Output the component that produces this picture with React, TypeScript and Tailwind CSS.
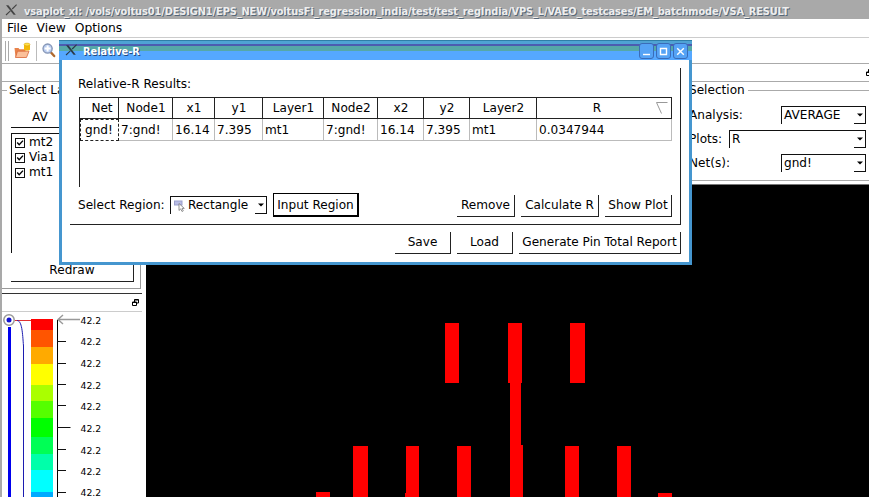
import React from "react";

const SANS = "font-['DejaVu_Sans',sans-serif]";

function XLogo({ tone }: { tone: string }) {
  return (
    <svg width="13" height="12" viewBox="0 0 13 12" className="shrink-0">
      <path d="M1 1.2h2.4l7.4 9.6H8.6z" fill={tone} />
      <path d="M11.6 0.6L7.2 5M5.4 6.8L1 11" stroke={tone} strokeWidth="1.1" />
    </svg>
  );
}

function FloatIcon() {
  return (
    <svg width="7" height="7" viewBox="0 0 7 7" className="shrink-0">
      <path d="M2.5 0.5h4v3.5h-4zM2.5 1h4" fill="none" stroke="#000" />
      <path d="M0.5 3h4v3.5h-4zM0.5 3.5h4" fill="#fff" stroke="#000" />
    </svg>
  );
}

function Caret() {
  return (
    <span className="flex h-[17px] w-[12px] shrink-0 items-center justify-center border-r border-b border-[#111]">
      <svg width="6" height="4" viewBox="0 0 6 4">
        <path d="M0 0.5h6l-3 3z" fill="#000" />
      </svg>
    </span>
  );
}

function Combo({ value, width, icon }: { value: string; width: string; icon?: React.ReactNode }) {
  return (
    <div className={`flex h-[18px] shrink-0 items-center border-t border-l border-[#111] pl-[2px] ${width}`}>
      {icon}
      <span className="flex-1">{value}</span>
      <Caret />
    </div>
  );
}

function Button({ label, width }: { label: string; width: string }) {
  return (
    <button className={`flex h-[22px] shrink-0 items-center justify-center border-r border-b border-[#222] ${width}`}>
      {label}
    </button>
  );
}

function CheckRow({ label }: { label: string }) {
  return (
    <div className="flex h-[15px] items-center gap-[4px]">
      <svg width="10" height="10" viewBox="0 0 10 10" className="shrink-0">
        <rect x="0.5" y="0.5" width="9" height="9" fill="#fff" stroke="#111" />
        <path d="M2.2 4.5l2 2.3L8 2.6" fill="none" stroke="#000" strokeWidth="1.4" />
      </svg>
      <span>{label}</span>
    </div>
  );
}

const bands: [number, number, string][] = [
  [6, 11, "#ff0000"],
  [17, 17, "#ff5500"],
  [34, 17, "#ffaa00"],
  [51, 21, "#ffff00"],
  [72, 16, "#aaff00"],
  [88, 17, "#55ff00"],
  [105, 19, "#00ff00"],
  [124, 17, "#00ff55"],
  [141, 16, "#00ffaa"],
  [157, 22, "#00ffff"],
  [179, 8, "#00aaff"],
];
const ticks = [28.5, 50, 71.5, 92.5, 114.5, 136.5, 157.5, 179.5];
const labels = [11, 32, 54, 76, 97, 119, 140.5, 162, 183];

function ColorScale() {
  return (
    <svg width="144" height="185" viewBox="2 -1 144 185" className="block">
      <path d="M15 7.5H31" stroke="#e03030" />
      <path d="M17 7.5C22 7.5 22.5 20 23.5 33V187" fill="none" stroke="#1c1cb0" />
      <rect x="8" y="14" width="3" height="173" fill="#0000ee" />
      <circle cx="9" cy="7" r="5.2" fill="#fff" stroke="#999" strokeWidth="1.5" />
      <circle cx="9" cy="7" r="2.5" fill="#1010d0" />
      {bands.map(([y, h, c]) => (
        <rect key={y} x="31" y={y} width="22" height={h} fill={c} />
      ))}
      <path d="M57.5 7V187" stroke="#000" />
      {ticks.map((y) => (
        <path key={y} d={`M57 ${Math.floor(y) + 0.5}H${y === 114.5 ? 70.5 : 66}`} stroke="#111" />
      ))}
      <path d="M80 6.5H58M63 2L58 6.5L63 11" fill="none" stroke="#999" strokeWidth="1.4" />
      {labels.map((y) => (
        <text key={y} x="80.5" y={y} fontSize="9.3" fontFamily="DejaVu Sans, sans-serif" fill="#000">
          42.2
        </text>
      ))}
    </svg>
  );
}

const bars: [number, number, number, number][] = [
  [445, 323, 14, 60],
  [508, 323, 14, 60],
  [570, 323, 15, 60],
  [510, 383, 11, 62],
  [510, 445, 13, 52],
  [353, 446, 15, 51],
  [406, 446, 13, 51],
  [405, 493, 1, 4],
  [457, 446, 14, 51],
  [565, 446, 14, 51],
  [617, 446, 14, 51],
  [316, 492, 14, 5],
  [658, 493, 14, 4],
];

function LayoutView() {
  return (
    <svg width="723" height="312" viewBox="146 185 723 312" className="block bg-black">
      {bars.map(([x, y, w, h], i) => (
        <rect key={i} x={x} y={y} width={w} height={h} fill="#ff0000" />
      ))}
    </svg>
  );
}

function Toolbar() {
  return (
    <div className="flex h-[26px] items-center border-b border-[#aaa] pl-[3px]">
      <div className="mr-[5px] h-[20px] w-[4px] border-x border-[#aaa]" />
      <svg width="17" height="17" viewBox="0 0 17 17">
        <path d="M0.5 6h4l1 1.2h6v8H1.5z" fill="#e8824a" />
        <path d="M3.5 9.2H15L12.5 15.5H1.5z" fill="#fbc09a" stroke="#d9683a" strokeWidth="0.8" />
        <path d="M10 2.5v5c0 1.4 6 1.4 6 0v-5z" fill="#f3b808" />
        <ellipse cx="13" cy="2.5" rx="3" ry="1.4" fill="#ffe04a" stroke="#d09a10" strokeWidth="0.5" />
      </svg>
      <div className="mr-[5px] ml-[5px] h-[20px] w-px bg-[#bbb]" />
      <svg width="14" height="15" viewBox="0 0 14 15">
        <path d="M9 9.5l3.2 3.5" stroke="#b06a30" strokeWidth="2.4" strokeLinecap="round" />
        <circle cx="5.6" cy="5.6" r="4.6" fill="#b8ccf0" stroke="#8595b5" strokeWidth="1.3" />
        <path d="M5.6 2.6v6M2.6 5.6h6" stroke="#fff" strokeWidth="2" />
      </svg>
    </div>
  );
}

function LeftPanel() {
  return (
    <div className="flex h-[229px] flex-col">
      <div className="h-[17px] shrink-0" />
      <div className="mr-[4px] border-t border-[#aaa]">
        <div className="flex h-[17px] items-center">
          <span className="h-px w-[5px] bg-[#aaa]" />
          <span className="ml-[2px]">Select Layers</span>
        </div>
        <div className="mr-px flex h-[190px] flex-col border-r border-b border-[#999] pr-[6px] pl-[9px]">
          <div className="mt-[3px] flex h-[26px] shrink-0 items-end border-b border-[#111] pb-[2px] pl-[21px]">AV</div>
          <div className="mt-[5px] h-[120px] shrink-0 border-t border-l border-[#111] pt-px pl-[3px]">
            <CheckRow label="mt2" />
            <CheckRow label="Via1" />
            <CheckRow label="mt1" />
          </div>
          <div className="mt-[7px] flex h-[22px] shrink-0 items-center justify-center border-r border-b border-[#222]">
            Redraw
          </div>
        </div>
      </div>
    </div>
  );
}

function Selection() {
  return (
    <div className="h-[121px] w-[723px] shrink-0 border-b border-[#777] bg-white">
      <div className="flex h-[17px] items-center justify-end overflow-hidden">
        <span className="w-[3px] overflow-hidden">
          <FloatIcon />
        </span>
      </div>
      <div className="h-[100px] border-y border-[#aaa] pr-[3px] pl-[543px]">
        <div className="-mr-[3px] flex h-[16px] items-center gap-[3px]">
          <span>Selection</span>
          <span className="h-px flex-1 bg-[#aaa]" />
        </div>
        <div className="mt-[8px] flex h-[18px] items-center justify-between">
          <span>Analysis:</span>
          <Combo value="AVERAGE" width="w-[85px]" />
        </div>
        <div className="mt-[6px] flex h-[18px] items-center justify-between">
          <span>Plots:</span>
          <Combo value="R" width="w-[137px]" />
        </div>
        <div className="mt-[6px] flex h-[18px] items-center justify-between">
          <span>Net(s):</span>
          <Combo value="gnd!" width="w-[85px]" />
        </div>
      </div>
    </div>
  );
}

const columns: { head: string; value: string; w: string }[] = [
  { head: "Net", value: "gnd!", w: "w-[39px]" },
  { head: "Node1", value: "7:gnd!", w: "w-[54px]" },
  { head: "x1", value: "16.14", w: "w-[42px]" },
  { head: "y1", value: "7.395", w: "w-[48px]" },
  { head: "Layer1", value: "mt1", w: "w-[61px]" },
  { head: "Node2", value: "7:gnd!", w: "w-[54px]" },
  { head: "x2", value: "16.14", w: "w-[46px]" },
  { head: "y2", value: "7.395", w: "w-[46px]" },
  { head: "Layer2", value: "mt1", w: "w-[67px]" },
  { head: "R", value: "0.0347944", w: "w-[135px]" },
];

function WindowButton({ children }: { children: React.ReactNode }) {
  return (
    <span className="flex h-[16px] w-[15px] items-center justify-center rounded-[3px] border border-[#3a6cb8] bg-[#55a3f5]">
      <svg width="9" height="9" viewBox="0 0 9 9" fill="none" stroke="#fff" strokeWidth="1.4">
        {children}
      </svg>
    </span>
  );
}

function Dialog() {
  return (
    <div className="absolute top-[40px] left-[59px] flex h-[225px] w-[633px] flex-col border-x-[3px] border-b-[3px] border-[#4596cf] bg-white">
      <div className="-mx-[3px] flex h-[20px] shrink-0 items-center bg-[linear-gradient(#2f7fa8_0px,#2f7fa8_1px,#4fa3d4_1px,#4fa3d4_4px,#4c5cb0_4px,#4c5cb0_6px,#55a8a8_6px,#55a8a8_11px,#55a8ff_11px)] pr-[4px] pl-[6px]">
        <XLogo tone="#2b3a48" />
        <span className="ml-[5px] flex-1 pt-[3px] text-[9.8px] font-bold text-white [text-shadow:1px_1px_0_#234a80]">
          Relative-R
        </span>
        <div className="flex gap-[2px] pt-[2px]">
          <WindowButton>
            <path d="M1 7.5h7" />
          </WindowButton>
          <WindowButton>
            <path d="M1.5 1.5h6v6h-6z" />
          </WindowButton>
          <WindowButton>
            <path d="M1.2 1.2l6.6 6.6M7.8 1.2L1.2 7.8" />
          </WindowButton>
        </div>
      </div>
      <div className="mt-[8px] mr-[8px] ml-[8px] flex h-[157px] shrink-0 flex-col border-r border-b border-[#222] pl-[8px]">
        <div className="mt-[8px] flex h-[16px] shrink-0 items-center">Relative-R Results:</div>
        <div className="mt-[5px] ml-px h-[90px] w-[593px] shrink-0 border-t border-l border-[#222]">
          <div className="flex h-[21px] border-b border-[#222]">
            {columns.map((c, i) => (
              <div
                key={c.head}
                className={`relative flex shrink-0 items-center justify-center border-r border-[#222] ${c.w} ${i === 0 ? "pl-[6px]" : i === 9 ? "pr-[14px]" : "pl-px"}`}
              >
                {c.head}
                {i === 9 && (
                  <svg width="12" height="12" viewBox="0 0 12 12" className="absolute top-[4px] right-[3px]">
                    <path d="M11.5 0.5H0.5l5 11" fill="none" stroke="#999" />
                  </svg>
                )}
              </div>
            ))}
          </div>
          <div className="flex h-[22px]">
            {columns.map((c, i) => (
              <div
                key={c.head}
                className={`flex shrink-0 items-center pt-px ${c.w} ${
                  i === 0
                    ? "border border-dashed border-[#222] pl-[4px]"
                    : "border-r border-b border-[#bbb] pl-[2px]"
                }`}
              >
                {c.value}
              </div>
            ))}
          </div>
        </div>
        <div className="mt-[6px] mr-[8px] flex h-[24px] shrink-0 items-center">
          <span className="w-[92px] pt-px">Select Region:</span>
          <Combo
            width="w-[97px]"
            value="Rectangle"
            icon={
              <svg width="11" height="12" viewBox="0 0 11 12" className="mr-[3px] ml-px">
                <rect x="0.5" y="1" width="7.5" height="4" fill="#b8bce4" stroke="#9a9fcc" />
                <path d="M5 3.5v7l1.7-1.6L8 11.5l1.3-.7L8 8.4h2.3z" fill="#fff" stroke="#777" strokeWidth="0.8" />
              </svg>
            }
          />
          <button className="ml-[6px] flex h-[24px] w-[86px] items-center justify-center border border-r-2 border-b-2 border-black pt-px">
            Input Region
          </button>
          <div className="flex flex-1 justify-end gap-[6px] pt-px">
            <Button label="Remove" width="w-[58px]" />
            <Button label="Calculate R" width="w-[78px]" />
            <Button label="Show Plot" width="w-[67px]" />
          </div>
        </div>
      </div>
      <div className="mt-[6px] mr-[8px] flex justify-end gap-[6px] pt-px">
        <Button label="Save" width="w-[56px]" />
        <Button label="Load" width="w-[56px]" />
        <Button label="Generate Pin Total Report" width="w-[162px]" />
      </div>
    </div>
  );
}

export default function App() {
  return (
    <div className={`relative h-[497px] w-[869px] overflow-hidden bg-white text-[12.1px] leading-[15px] whitespace-nowrap text-black ${SANS}`}>
      <div className="flex h-[19px] items-center bg-[#a9a9a9] pl-[5px]">
        <XLogo tone="#444" />
        <span className="ml-[6px] pt-[4px] text-[9.8px] font-bold tracking-[-0.093px] text-[#eee] [text-shadow:1px_1px_0_#567]">
          vsaplot_xl: /vols/voltus01/DESIGN1/EPS_NEW/voltusFi_regression_india/test/test_regIndia/VPS_L/VAEO_testcases/EM_batchmode/VSA_RESULT
        </span>
      </div>
      <div className="h-[478px] border-l-2 border-[#a9a9a9]">
        <div className="flex h-[19px] items-center gap-[9px] border-b border-[#ccc] pt-px pl-[5px] text-[12.3px]">
          <span>File</span>
          <span>View</span>
          <span>Options</span>
        </div>
        <Toolbar />
        <div className="flex">
          <div className="w-[144px] shrink-0">
            <LeftPanel />
            <div className="mr-[4px] flex h-[19px] items-center justify-end border-t border-b border-t-[#333] border-b-[#ccc] pr-[3px]">
              <FloatIcon />
            </div>
            <ColorScale />
          </div>
          <div>
            <Selection />
            <LayoutView />
          </div>
        </div>
      </div>
      <Dialog />
    </div>
  );
}
